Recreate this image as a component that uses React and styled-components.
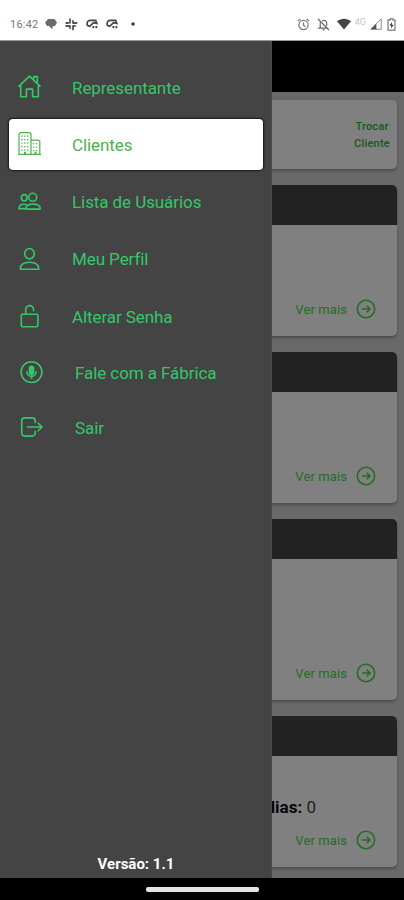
import React from "react";
import styled, { createGlobalStyle } from "styled-components";

const GlobalStyle = createGlobalStyle`
  * {
    box-sizing: border-box;
  }
  body {
    margin: 0;
    background: #000;
    font-family: Roboto, "Liberation Sans", sans-serif;
  }
`;

const Screen = styled.div`
  width: 404px;
  height: 900px;
  display: flex;
  flex-direction: column;
  overflow: hidden;
`;

const StatusBar = styled.header`
  height: 41px;
  flex: none;
  display: flex;
  justify-content: space-between;
  align-items: flex-start;
  padding: 16px 8px 0 10px;
  background: #fff;
  border-bottom: 1px solid #999;
`;

const StatusGroup = styled.div`
  height: 16px;
  display: flex;
  align-items: center;
  gap: ${(p) => p.$gap}px;

  svg:last-child {
    margin-left: ${(p) => p.$lastGap}px;
  }
`;

const Clock = styled.span`
  width: 29px;
  font-size: 11px;
  letter-spacing: 0.2px;
  color: #777;
  margin-right: -2px;
`;

const Network = styled.span`
  font-size: 9px;
  color: #c4c4c4;
  margin: -4px -3px 0 -3px;
`;

const AppArea = styled.div`
  position: relative;
  height: 837px;
  flex: none;
  background: #696969;
  overflow: hidden;
`;

const TopBar = styled.div`
  height: 51px;
  background: #000;
`;

const Content = styled.main`
  padding: 8px 7px 0;
  display: flex;
  flex-direction: column;
  gap: 16px;
`;

const Card = styled.section`
  height: ${(p) => p.$height}px;
  flex: none;
  display: flex;
  flex-direction: column;
  background: #808080;
  border-radius: 5px;
  box-shadow: 0 2px 3px rgba(0, 0, 0, 0.28);
  overflow: hidden;
`;

const ClientCard = styled(Card)`
  height: 69px;
  align-items: flex-end;
  justify-content: center;
  padding: 1px 7px 0 0;
`;

const ChangeClient = styled.div`
  width: 36px;
  font-size: 11px;
  font-weight: 500;
  line-height: 17px;
  letter-spacing: 0.2px;
  text-align: center;
  white-space: nowrap;
  color: #125c16;
`;

const CardHeader = styled.div`
  height: 40px;
  flex: none;
  background: #222;
`;

const CardBody = styled.div`
  flex: 1;
  display: flex;
  flex-direction: column;
  justify-content: flex-end;
  align-items: flex-end;
  padding: 0 21px 17px 0;
`;

const DaysRow = styled.div`
  font-size: 17px;
  line-height: 20px;
  color: #1e1e1e;
  margin: 0 60px 13px 0;

  b {
    color: #080808;
  }
`;

const SeeMore = styled.div`
  display: flex;
  align-items: center;
  gap: 9px;
  height: 20px;
  font-size: 13px;
  letter-spacing: 0.1px;
  color: #226d26;
`;

const Drawer = styled.aside`
  position: absolute;
  top: 0;
  left: 0;
  bottom: 0;
  width: 272px;
  display: flex;
  flex-direction: column;
  justify-content: space-between;
  background: #444;
  border-right: 1px solid #4b4b4b;
`;

const Menu = styled.nav`
  display: flex;
  flex-direction: column;
  padding: 21px 8px 0 9px;
`;

const MenuItem = styled.div`
  height: ${(p) => (p.$compact ? 50 : 51)}px;
  display: flex;
  align-items: center;
  gap: 30px;
  padding-left: ${(p) => (p.$compact ? 10 : 8)}px;
  margin-bottom: ${(p) => (p.$compact ? 5 : 6.3)}px;
  border-radius: 4px;
  font-size: 17px;
  letter-spacing: -0.08px;
  color: ${(p) => (p.$active ? "#4cb050" : "#35c768")};
  background: ${(p) => (p.$active ? "#fff" : "transparent")};
  box-shadow: ${(p) => (p.$active ? "0 0 2px 1px #151515" : "none")};

  svg {
    flex: none;
  }
`;

const MenuLabel = styled.span`
  margin-left: ${(p) => (p.$compact ? 1 : 0)}px;
`;

const Version = styled.div`
  padding: 0 0 4px 1px;
  font-size: 15px;
  line-height: 19px;
  font-weight: 700;
  text-align: center;
  color: #fff;
`;

const NavBar = styled.footer`
  flex: 1;
  display: flex;
  justify-content: center;
  align-items: center;
  background: #000;
`;

const HomeHandle = styled.div`
  width: 113px;
  height: 5px;
  border-radius: 2px;
  background: #e8e4e5;
`;

const MenuSvg = ({ top = 0, children }) => (
  <svg
    width="25"
    height="26"
    viewBox={`0 ${top} 25 26`}
    fill="none"
    stroke="currentColor"
    strokeWidth="1.6"
    strokeLinejoin="round"
    strokeLinecap="round"
  >
    {children}
  </svg>
);

const HomeIcon = () => (
  <MenuSvg top={1.4}>
    <path d="M2 12.5 12.5 2.5 23 12.5M3.7 12v11.2h5.7v-7.7h6.2v7.7h5.7V12M16.8 5V3h3.5v5.8" />
  </MenuSvg>
);

const BuildingIcon = () => (
  <MenuSvg top={1.4}>
    <path strokeWidth="1.2" d="M2 23.5V3.2L3.5 2h9.3L14 3.2v20.3M14 9.5h7.5l1.3 1.2v12.8M1.5 23.8h22" />
    <path
      strokeWidth="1.2"
      strokeDasharray="1.3 1.6"
      strokeLinecap="butt"
      d="M4.2 5.5h8M4.2 9h8M4.2 12.5h8M4.2 16h8M4.2 19.5h8M16 13h5.5M16 16.5h5.5M16 20h5.5"
    />
    <path strokeWidth="2" d="M8 22v1M18.5 22v1" />
  </MenuSvg>
);

const UsersIcon = () => (
  <MenuSvg top={0.4}>
    <circle cx="15.7" cy="8.7" r="4" />
    <ellipse cx="7.2" cy="9.2" rx="2.8" ry="3.2" />
    <path d="M8.8 20.5c0-3.8 3-5 7.2-5s7.3 1.4 7.3 5ZM8.4 20H1.8c0-3 2-4.3 5-4.3 1 0 2 .2 2.8.5" />
  </MenuSvg>
);

const UserIcon = () => (
  <MenuSvg>
    <ellipse cx="12.5" cy="7.7" rx="4.8" ry="5.2" />
    <path d="M3.2 23.2c0-4.7 3.6-7 9.3-7s9.3 2.3 9.3 7Z" />
  </MenuSvg>
);

const LockIcon = () => (
  <MenuSvg top={0.8}>
    <rect x="4.3" y="11" width="16.6" height="12.5" rx="1.4" />
    <path d="M8.7 11V6.5a3.9 3.9 0 0 1 7.8-.4v1.4" />
  </MenuSvg>
);

const MicIcon = () => (
  <MenuSvg top={0.6}>
    <circle cx="12.5" cy="12.7" r="10.4" />
    <rect x="9.7" y="6" width="5.6" height="10" rx="2.8" fill="currentColor" stroke="none" />
    <path d="M8 12.5c0 6 9 6 9 0M12.5 17v2" />
  </MenuSvg>
);

const LogoutIcon = () => (
  <MenuSvg top={0.6}>
    <path d="M16.2 8.2V6.5a3 3 0 0 0-3-3H5.7a3 3 0 0 0-3 3v12.2a3 3 0 0 0 3 3h7.5a3 3 0 0 0 3-3V17M8.5 12.6H23M19.2 8.8l3.8 3.8-3.8 3.8" />
  </MenuSvg>
);

const ArrowCircle = () => (
  <svg width="20" height="20" viewBox="0 0 20 20" fill="none" stroke="currentColor" strokeWidth="1.5">
    <circle cx="10" cy="10" r="8.7" />
    <path d="M6 10h8M10.7 6.7 14 10l-3.3 3.3" />
  </svg>
);

const ChatIcon = () => (
  <svg width="12" height="12" viewBox="0 0 12 12" fill="#6b6b6b">
    <path d="M3 1h6.5L12 4.5 10 8H8l-1 3-3-3H2L0 4.5Z" />
  </svg>
);

const SlackIcon = () => (
  <svg width="13" height="13" viewBox="0 0 13 13" stroke="#555" strokeWidth="1.8" strokeLinecap="round">
    <path d="M5 1.2v3.6M1.2 5h2M8 4.8V3M8 5h3.6M5 8H1.2M5 8v2M8 8v3.6M8 8h2" />
  </svg>
);

const MaskIcon = () => (
  <svg width="12" height="12" viewBox="0 0 13 12" fill="none" stroke="#444" strokeWidth="1.8">
    <path d="M1.5 7.5C.5 3 2.8 2 5 2h5.5l1.2 3.3-3.5-.8-2 2L4 8.5Z" />
    <path d="M7 9.3h1.9M10.2 9.3h2" strokeWidth="2.4" />
  </svg>
);

const DotIcon = () => (
  <svg width="4" height="4" viewBox="0 0 4 4">
    <circle cx="2" cy="2" r="1.7" fill="#333" />
  </svg>
);

const AlarmIcon = () => (
  <svg width="13" height="13" viewBox="0 0 13 13" fill="none" stroke="#777" strokeWidth="1.2">
    <circle cx="6.5" cy="7" r="4.6" />
    <path d="M1 3 3.4 1M12 3 9.6 1M6.5 4.4v3L8.5 8.5" />
  </svg>
);

const BellOffIcon = () => (
  <svg width="13" height="13" viewBox="0 0 13 13" fill="none" stroke="#666" strokeWidth="1.2">
    <path d="M1 1l11 11M3.2 4.5v5L2 10.2h7.5M5 2.8c2.5-1.3 4.7.2 4.7 2.7v2.3M5.5 11.8h2" />
  </svg>
);

const WifiIcon = () => (
  <svg width="14" height="12" viewBox="0 0 14 12">
    <path d="M0 3.2C4-.2 10-.2 14 3.2L7 11.6Z" fill="#444" />
  </svg>
);

const SignalIcon = () => (
  <svg width="12" height="12" viewBox="0 0 12 12">
    <path d="M.8 11.3 11.2.9v10.4Z" fill="none" stroke="#888" />
    <path d="M.8 11.3 6.4 5.6v5.7Z" fill="#555" />
  </svg>
);

const BatteryIcon = () => (
  <svg width="9" height="13" viewBox="0 0 9 13">
    <path d="M1 2.2h2V.9h3v1.3h2v9.9H1Z" fill="none" stroke="#777" strokeWidth="1.2" />
    <path d="M4.8 4 2.5 7.4h1.7v3.2l2.4-3.8H4.8Z" fill="#333" />
  </svg>
);

const items = [
  { label: "Representante", icon: HomeIcon },
  { label: "Clientes", icon: BuildingIcon, active: true },
  { label: "Lista de Usuários", icon: UsersIcon },
  { label: "Meu Perfil", icon: UserIcon },
  { label: "Alterar Senha", icon: LockIcon },
  { label: "Fale com a Fábrica", icon: MicIcon, compact: true },
  { label: "Sair", icon: LogoutIcon, compact: true },
];

const cards = [{ height: 151 }, { height: 151 }, { height: 181 }, { height: 151, days: 0 }];

export default function App() {
  return (
    <>
      <GlobalStyle />
      <Screen>
        <StatusBar>
          <StatusGroup $gap={8} $lastGap={5}>
            <Clock>16:42</Clock>
            <ChatIcon />
            <SlackIcon />
            <MaskIcon />
            <MaskIcon />
            <DotIcon />
          </StatusGroup>
          <StatusGroup $gap={7} $lastGap={-2}>
            <AlarmIcon />
            <BellOffIcon />
            <WifiIcon />
            <Network>4G</Network>
            <SignalIcon />
            <BatteryIcon />
          </StatusGroup>
        </StatusBar>
        <AppArea>
          <TopBar />
          <Content>
            <ClientCard>
              <ChangeClient>
                Trocar
                <br />
                Cliente
              </ChangeClient>
            </ClientCard>
            {cards.map((card, index) => (
              <Card key={index} $height={card.height}>
                <CardHeader />
                <CardBody>
                  {card.days !== undefined && (
                    <DaysRow>
                      <b>dias:</b> {card.days}
                    </DaysRow>
                  )}
                  <SeeMore>
                    <span>Ver mais</span>
                    <ArrowCircle />
                  </SeeMore>
                </CardBody>
              </Card>
            ))}
          </Content>
          <Drawer>
            <Menu>
              {items.map(({ label, icon: Icon, active, compact }) => (
                <MenuItem key={label} $active={active} $compact={compact}>
                  <Icon />
                  <MenuLabel $compact={compact}>{label}</MenuLabel>
                </MenuItem>
              ))}
            </Menu>
            <Version>Versão: 1.1</Version>
          </Drawer>
        </AppArea>
        <NavBar>
          <HomeHandle />
        </NavBar>
      </Screen>
    </>
  );
}
